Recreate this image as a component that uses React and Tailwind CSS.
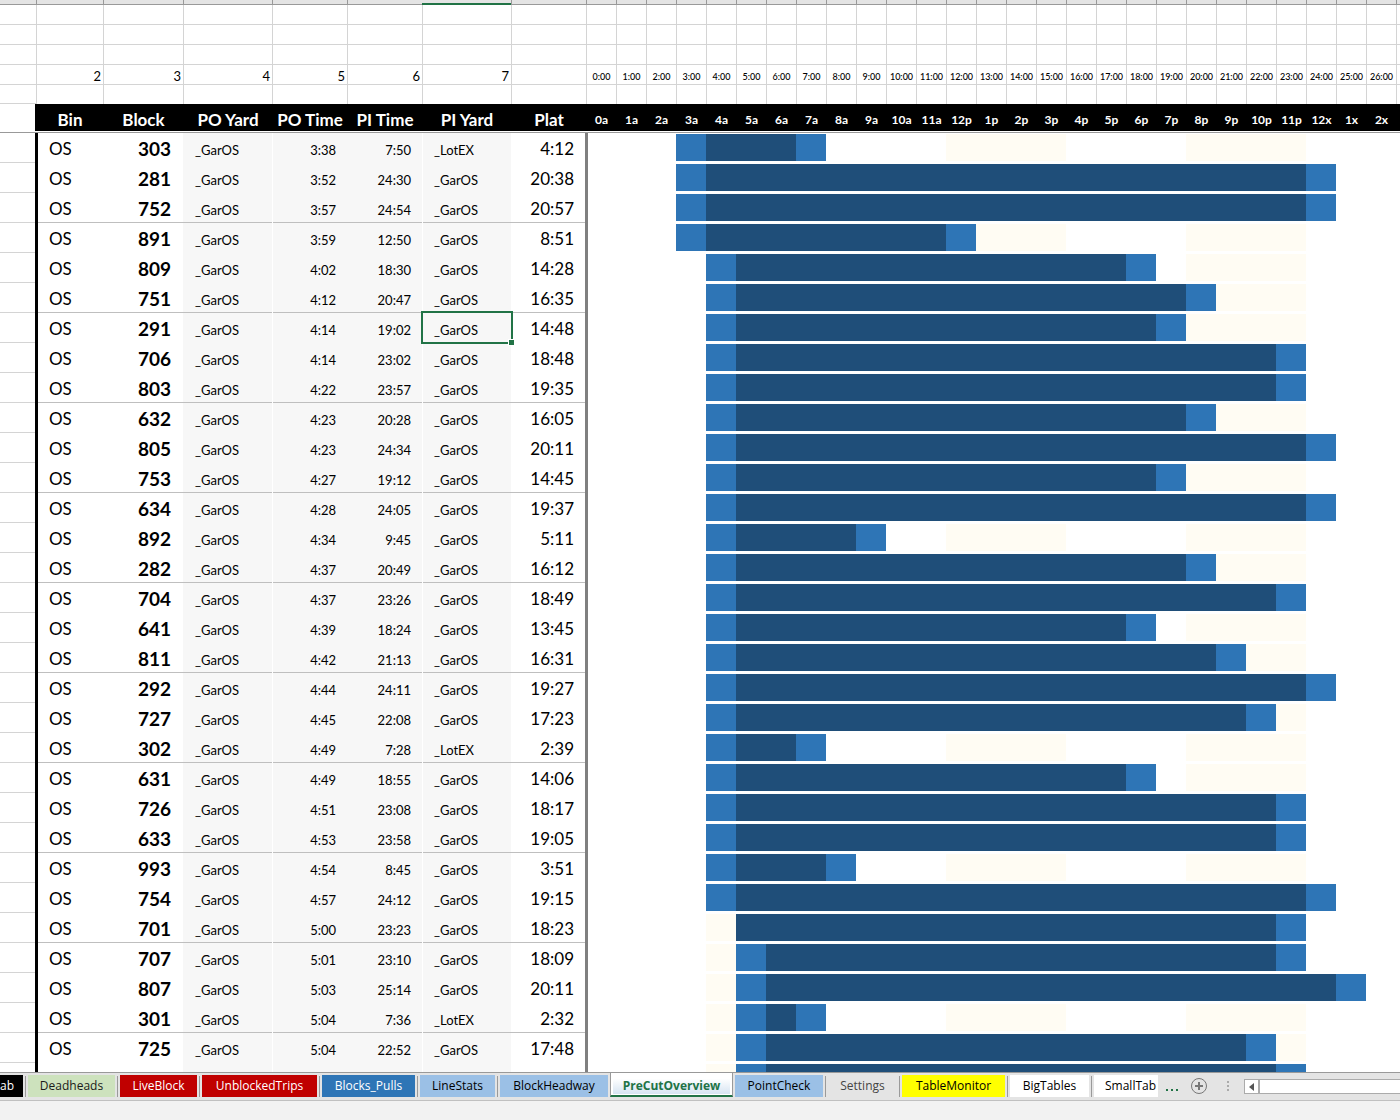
import React from "react";

const LEAD = [
  { n: "" }, { n: "2" }, { n: "3" }, { n: "4" }, { n: "5" }, { n: "6" }, { n: "7" }, { n: "" },
];

const HEADS = ["Bin", "Block", "PO Yard", "PO Time", "PI Time", "PI Yard", "Plat"];

const HOURS = [
  "0a", "1a", "2a", "3a", "4a", "5a", "6a", "7a", "8a", "9a", "10a", "11a", "12p",
  "1p", "2p", "3p", "4p", "5p", "6p", "7p", "8p", "9p", "10p", "11p", "12x", "1x", "2x",
];

const ROWS = [
  ["303", "3:38", "7:50", "_LotEX", "4:12"],
  ["281", "3:52", "24:30", "_GarOS", "20:38"],
  ["752", "3:57", "24:54", "_GarOS", "20:57"],
  ["891", "3:59", "12:50", "_GarOS", "8:51"],
  ["809", "4:02", "18:30", "_GarOS", "14:28"],
  ["751", "4:12", "20:47", "_GarOS", "16:35"],
  ["291", "4:14", "19:02", "_GarOS", "14:48"],
  ["706", "4:14", "23:02", "_GarOS", "18:48"],
  ["803", "4:22", "23:57", "_GarOS", "19:35"],
  ["632", "4:23", "20:28", "_GarOS", "16:05"],
  ["805", "4:23", "24:34", "_GarOS", "20:11"],
  ["753", "4:27", "19:12", "_GarOS", "14:45"],
  ["634", "4:28", "24:05", "_GarOS", "19:37"],
  ["892", "4:34", "9:45", "_GarOS", "5:11"],
  ["282", "4:37", "20:49", "_GarOS", "16:12"],
  ["704", "4:37", "23:26", "_GarOS", "18:49"],
  ["641", "4:39", "18:24", "_GarOS", "13:45"],
  ["811", "4:42", "21:13", "_GarOS", "16:31"],
  ["292", "4:44", "24:11", "_GarOS", "19:27"],
  ["727", "4:45", "22:08", "_GarOS", "17:23"],
  ["302", "4:49", "7:28", "_LotEX", "2:39"],
  ["631", "4:49", "18:55", "_GarOS", "14:06"],
  ["726", "4:51", "23:08", "_GarOS", "18:17"],
  ["633", "4:53", "23:58", "_GarOS", "19:05"],
  ["993", "4:54", "8:45", "_GarOS", "3:51"],
  ["754", "4:57", "24:12", "_GarOS", "19:15"],
  ["701", "5:00", "23:23", "_GarOS", "18:23"],
  ["707", "5:01", "23:10", "_GarOS", "18:09"],
  ["807", "5:03", "25:14", "_GarOS", "20:11"],
  ["301", "5:04", "7:36", "_LotEX", "2:32"],
  ["725", "5:04", "22:52", "_GarOS", "17:48"],
];

const TABS = [
  { label: "Deadheads", cls: "w-[87px] bg-[#cde2bd] text-[#1a1a1a]" },
  { label: "LiveBlock", cls: "w-[77px] bg-[#c00000] text-white" },
  { label: "UnblockedTrips", cls: "w-[115px] bg-[#c00000] text-white" },
  { label: "Blocks_Pulls", cls: "w-[93px] bg-[#2e75b6] text-white" },
  { label: "LineStats", cls: "w-[75px] bg-[#9bc0e6] text-black" },
  { label: "BlockHeadway", cls: "w-[108px] bg-[#9bc0e6] text-black" },
];

const TABS_AFTER = [
  { label: "PointCheck", cls: "w-[88px] bg-[#9bc0e6] text-black" },
  { label: "Settings", cls: "w-[69px] text-[#444444]" },
  { label: "TableMonitor", cls: "w-[103px] bg-[#ffff00] text-black" },
  { label: "BigTables", cls: "w-[79px] bg-white text-black" },
];

const toParts = (t) => t.split(":").map(Number);

function hourFill(hour, start, end) {
  const [sh, sm] = toParts(start);
  const [eh] = toParts(end);
  if (hour === eh || (hour === sh && sm > 0)) return "bg-[#2e75b6]";
  if (hour >= sh && hour < eh) return "bg-[#1f4e79]";
  if (hour === 4 || (hour >= 12 && hour <= 15) || (hour >= 20 && hour <= 23)) return "bg-[#fffcf3]";
  return "bg-white";
}

function HourCells({ start, end }) {
  return HOURS.map((h, i) =>
    i === 0 ? (
      <td key={h} className="shadow-[inset_2px_0_0_#808080]" />
    ) : (
      <td key={h} className={`border-t border-b-2 border-white ${hourFill(i, start, end)}`} />
    )
  );
}

function BlankRow({ height }) {
  return (
    <tr className={height}>
      <td className="border-b border-[#d4d4d4]" />
      {LEAD.slice(1).map((c, i) => (
        <td key={i} className="border-b border-l border-[#d4d4d4]" />
      ))}
      {HOURS.map((h) => (
        <td key={h} className="border-b border-l border-[#d4d4d4]" />
      ))}
      <td className="border-b border-l border-[#d4d4d4]" />
    </tr>
  );
}

function Sheet() {
  return (
    <table className="w-full table-fixed border-separate border-spacing-0 font-['Lato','Liberation_Sans',sans-serif] text-black">
      <colgroup>
        <col className="w-[36px]" />
        <col className="w-[67px]" />
        <col className="w-[80px]" />
        <col className="w-[89px]" />
        <col className="w-[75px]" />
        <col className="w-[75px]" />
        <col className="w-[89px]" />
        <col className="w-[75px]" />
        {HOURS.map((h) => (
          <col key={h} className="w-[30px]" />
        ))}
        <col />
      </colgroup>
      <thead className="[&_td]:p-0 [&_th]:p-0">
        <tr className="h-[5px] bg-[#e4e4e4]">
          {LEAD.map((c, i) => (
            <td
              key={i}
              className={
                i === 6
                  ? "border-b-2 border-[#217346]"
                  : i === 0
                    ? "border-b border-[#999999]"
                    : "border-b border-l border-[#999999]"
              }
            />
          ))}
          {HOURS.map((h) => (
            <td key={h} className="border-b border-l border-[#999999]" />
          ))}
          <td className="border-b border-l border-[#999999]" />
        </tr>
        <BlankRow height="h-[20px]" />
        <BlankRow height="h-[20px]" />
        <BlankRow height="h-[20px]" />
        <tr className="h-[20px] text-right text-[13px] leading-4">
          {LEAD.map((c, i) => (
            <td key={i} className={i === 0 ? "border-b border-[#d4d4d4]" : "border-b border-l border-[#d4d4d4]"}>
              <div className="pt-0.5 pr-0.5">{c.n}</div>
            </td>
          ))}
          {HOURS.map((h, i) => (
            <td key={h} className="border-b border-l border-[#d4d4d4] text-center text-[9px]">
              <div className="pt-[5px] leading-3 font-medium">{i}:00</div>
            </td>
          ))}
          <td className="border-b border-l border-[#d4d4d4]" />
        </tr>
        <tr className="h-[19px]">
          <td className="border-b border-[#d4d4d4]" />
          {LEAD.slice(1).map((c, i) => (
            <td key={i} className="border-l border-[#d4d4d4]" />
          ))}
          {HOURS.map((h) => (
            <td key={h} className="border-l border-[#d4d4d4]" />
          ))}
          <td className="border-l border-[#d4d4d4]" />
        </tr>
        <tr className="h-[27px] text-[17px] leading-5 font-bold text-white">
          <td className="shadow-[inset_-1px_0_0_#000]" />
          {HEADS.map((h) => (
            <th key={h} scope="col" className="bg-black whitespace-nowrap">
              <div className="pt-1 pl-px">{h}</div>
            </th>
          ))}
          {HOURS.map((h) => (
            <th key={h} scope="col" className="bg-black text-[12px]">
              <div className="pt-1 pl-px">{h}</div>
            </th>
          ))}
          <td className="bg-black" />
        </tr>
        <tr className="h-[2px]">
          <td colSpan={36} className="border-b border-[#999999]" />
        </tr>
      </thead>
      <tbody className="[&_td]:p-0">
        {ROWS.map(([block, out, inn, yard, plat], i) => {
          const ruled = i % 3 === 2;
          const line = ruled ? "shadow-[inset_0_-1px_0_#bfbfbf]" : "";
          const gray = `bg-[#f7f7f7] text-[13px] ${line}`;
          return (
            <tr key={block} className="h-[30px] leading-5">
              <td className="shadow-[inset_-1px_0_0_#000,inset_0_-1px_0_#d4d4d4]" />
              <td
                className={`text-[17px] ${
                  ruled ? "shadow-[inset_2px_0_0_#000,inset_0_-1px_0_#bfbfbf]" : "shadow-[inset_2px_0_0_#000]"
                }`}
              >
                <div className="pt-0.5 pl-[13px]">OS</div>
              </td>
              <td className={`text-right text-[19px] font-bold ${line}`}>
                <div className="pt-0.5 pr-3">{block}</div>
              </td>
              <td className={gray}>
                <div className="pt-1 pl-3">_GarOS</div>
              </td>
              <td className={`border-l border-white text-right ${gray}`}>
                <div className="pt-1 pr-[11px]">{out}</div>
              </td>
              <td className={`text-right ${gray}`}>
                <div className="pt-1 pr-[11px]">{inn}</div>
              </td>
              <td className={`relative border-l border-white ${gray}`}>
                <div className="pt-1 pl-[11px]">{yard}</div>
                {block === "291" && (
                  <div className="pointer-events-none absolute -top-0.5 -right-0.5 -bottom-px -left-0.5 z-10 border-2 border-[#217346]">
                    <span className="absolute -right-1 -bottom-1 size-[7px] border border-white bg-[#217346]" />
                  </div>
                )}
              </td>
              <td
                className={`text-right text-[17px] ${
                  ruled ? "shadow-[inset_-1px_0_0_#808080,inset_0_-1px_0_#bfbfbf]" : "shadow-[inset_-1px_0_0_#808080]"
                }`}
              >
                <div className="pt-0.5 pr-3">{plat}</div>
              </td>
              <HourCells start={out} end={inn} />
              <td />
            </tr>
          );
        })}
        <tr className="h-[30px]">
          <td className="shadow-[inset_-1px_0_0_#000]" />
          <td className="shadow-[inset_2px_0_0_#000]" />
          <td />
          <td className="bg-[#f7f7f7]" />
          <td className="border-l border-white bg-[#f7f7f7]" />
          <td className="bg-[#f7f7f7]" />
          <td className="border-l border-white bg-[#f7f7f7]" />
          <td className="shadow-[inset_-1px_0_0_#808080]" />
          <HourCells start="5:05" end="23:05" />
          <td />
        </tr>
      </tbody>
    </table>
  );
}

function Separator() {
  return <span className="mx-0.5 mt-[3px] h-[21px] w-px shrink-0 bg-[#9a9a9a]" />;
}

function Tab({ label, cls }) {
  return (
    <button type="button" className={`mt-0.5 h-[22px] shrink-0 text-center leading-5 whitespace-nowrap ${cls}`}>
      {label}
    </button>
  );
}

function TabBar() {
  return (
    <nav className="flex h-[29px] shrink-0 items-start overflow-hidden border-t border-b border-t-[#999999] border-b-[#c0c0c0] bg-[#e4e4e4] font-['Open_Sans','Noto_Sans',sans-serif] text-[12px]">
      <button type="button" className="mt-0.5 h-[22px] w-[23px] shrink-0 bg-black text-left leading-5 text-white">
        ab
      </button>
      {TABS.map((t) => (
        <React.Fragment key={t.label}>
          <Separator />
          <Tab {...t} />
        </React.Fragment>
      ))}
      <button
        type="button"
        className="-mt-px ml-0.5 h-[25px] w-[123px] shrink-0 border-x border-b-2 border-x-[#999999] border-b-[#217346] bg-white px-0.5 pb-px font-bold text-[#217346]"
      >
        <span className="block h-[22px] bg-linear-to-b from-white from-30% to-[#d6e4f2] pt-1 leading-5">
          PreCutOverview
        </span>
      </button>
      {TABS_AFTER.map((t, i) => (
        <React.Fragment key={t.label}>
          {i === 0 ? <span className="w-0.5 shrink-0" /> : <Separator />}
          <Tab {...t} />
        </React.Fragment>
      ))}
      <Separator />
      <button type="button" className="mt-0.5 h-[22px] w-[64px] shrink-0 bg-white pl-[11px] text-left leading-5 whitespace-nowrap text-black">
        SmallTab
      </button>
      <button type="button" aria-label="More sheets" className="mt-3 ml-2 flex h-4 shrink-0 gap-[3px] pt-1">
        <span className="size-0.5 bg-[#217346]" />
        <span className="size-0.5 bg-[#217346]" />
        <span className="size-0.5 bg-[#217346]" />
      </button>
      <button type="button" aria-label="New sheet" className="mt-1 ml-3 shrink-0">
        <svg width="18" height="18" viewBox="0 0 18 18" fill="none" stroke="#777777">
          <circle cx="9" cy="9" r="7.5" />
          <path d="M9 5v8M5 9h8" strokeWidth="2" />
        </svg>
      </button>
      <span className="mt-2 ml-[19px] flex shrink-0 flex-col gap-0.5">
        <span className="size-0.5 bg-[#aaaaaa]" />
        <span className="size-0.5 bg-[#aaaaaa]" />
        <span className="size-0.5 bg-[#aaaaaa]" />
      </span>
      <div className="mt-1.5 ml-[15px] flex h-[15px] min-w-0 grow border border-r-0 border-[#ababab] bg-white">
        <button type="button" aria-label="Scroll left" className="flex w-[15px] shrink-0 items-center justify-center border-r-2 border-[#ababab]">
          <svg width="5" height="8" viewBox="0 0 5 8">
            <path d="M5 0v8L0 4z" fill="#555555" />
          </svg>
        </button>
      </div>
    </nav>
  );
}

export default function App() {
  return (
    <div className="flex h-screen flex-col overflow-hidden bg-white">
      <main className="min-h-0 flex-1 overflow-hidden">
        <Sheet />
      </main>
      <TabBar />
      <footer className="h-[19px] shrink-0 bg-[#f2f2f2]" />
    </div>
  );
}
